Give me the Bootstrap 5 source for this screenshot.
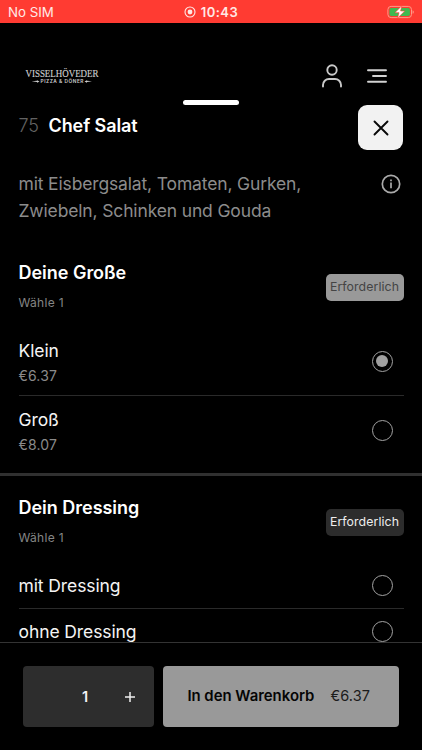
<!DOCTYPE html>
<html lang="de" data-bs-theme="dark">
<head>
<meta charset="utf-8">
<meta name="viewport" content="width=device-width, initial-scale=1">
<title>Chef Salat</title>
<link href="https://cdn.jsdelivr.net/npm/bootstrap@5.3.0/dist/css/bootstrap.min.css" rel="stylesheet">
<style>
body{height:750px;background:#000;color:#f4f4f4;font-family:Inter,"Liberation Sans",sans-serif;font-size:17.5px;line-height:24px;letter-spacing:-.1px}
svg{display:block;flex:none}
.status{height:23px;background:#ff3b32;color:#ffe9e6;font-size:13.3px;padding:0 8px;letter-spacing:0}
.status>*{flex:1 1 0}
.clock{font-weight:600;font-size:13px;gap:5px;letter-spacing:.5px}
.topnav{height:77px;padding:28px 35.5px 0 25px}
.brand{font-family:"Liberation Serif",serif;color:#d0d0d0;letter-spacing:0;overflow:visible}
.menu-icon{margin-left:24px}
.handle{width:56px;height:5px;background:#fff}
.sheet{padding:0 18.5px}
.sheet-first{padding-top:34.5px}
.sheet-next{padding-top:17.5px}
.item-no{color:#626262;margin-right:9.5px}
.item-title,.group-title{font-size:18px;font-weight:600;color:#fff;letter-spacing:-.02px}
.item-title{padding-top:7px;letter-spacing:-.07px}
.close-btn{width:45px;height:45px;border-radius:9px;background:#f2f2f2;margin-right:.5px}
.desc{margin-top:20px;line-height:27px;color:#8c8c8c;letter-spacing:-.15px}
.desc svg{margin:4px 3px 0 0}
.hint{font-size:12px;line-height:16px;color:#858585;letter-spacing:.3px;margin-top:9px}
.tag{width:78px;height:27.5px;border-radius:5px;font-size:12.300px;letter-spacing:.1px;margin-top:15px}
.tag-done{background:#999;color:#444}
.tag-open{background:#2c2c2c;color:#eee}
.choices{padding-top:17px}
.choice{border-bottom:1px solid #2a2a2a;padding-right:11px}
.choice:last-child{border-bottom:0}
.choice>:first-child{padding-top:2px}
.choice-lg{height:68.5px}
.choice-sm{height:46px}
.choice-sm>:first-child{padding-top:1px}
.price{font-size:14px;line-height:20px;color:#8a8a8a;margin-top:3px;letter-spacing:.15px}
.radio{width:21px;height:21px;border:1.2px solid #a3a3a3;border-radius:50%;flex:none}
.radio.on::after{content:"";width:12px;height:12px;border-radius:50%;background:#a0a0a0}
.band{height:3.5px;background:#303030}
.footer{height:108px;border-top:1px solid #333;padding:22.5px 23px 23px;gap:9.5px;background:#000;font-size:14.5px}
.stepper,.cart{border-radius:4px;height:61.5px}
.stepper{width:131px;background:#2d2d2d;padding:2px 19px 0 59px;font-weight:600}
.cart,.cart:hover{width:236px;background:#999;color:#050505;gap:16px;font-size:14.900px;letter-spacing:0}
.cart span{color:#1c1c1c;font-size:14.5px;margin-right:5px;letter-spacing:.1px}
</style>
<script src="https://cdn.jsdelivr.net/npm/bootstrap@5.3.0/dist/js/bootstrap.bundle.min.js"></script>
</head>
<body class="d-flex flex-column overflow-hidden">
<div class="status d-flex align-items-center flex-shrink-0">
  <span>No SIM</span>
  <div class="clock d-flex align-items-center justify-content-center">
    <svg width="12" height="12" viewBox="0 0 12 12"><circle cx="6" cy="6" r="5" fill="none" stroke="#ffe9e6" stroke-width="1.1"/><circle cx="6" cy="6" r="2.4" fill="#ffe9e6"/></svg>
    <span>10:43</span>
  </div>
  <div class="d-flex justify-content-end">
    <svg width="27" height="14" viewBox="0 0 27 14"><rect x=".9" y="1.4" width="23.6" height="11.2" rx="3.2" fill="none" stroke="#ff9a87"/><rect x="2.5" y="3" width="20.4" height="8" rx="1.8" fill="#3fb950"/><path d="M25.6 5.2q1.2.4 1.2 1.8t-1.2 1.8z" fill="#ff9a87"/><path d="M14.8.8 7.9 7.7H12L10.5 13.200 17.800 6H13.600z" fill="#fff" stroke="#ff3b32" stroke-width=".6"/></svg>
  </div>
</div>
<nav class="topnav d-flex align-items-center flex-shrink-0">
  <svg class="brand" width="75" height="26" viewBox="0 -3 75 26" fill="currentColor"><text x=".5" y="11.300" font-size="10.800" textLength="73" lengthAdjust="spacingAndGlyphs" stroke="currentColor" stroke-width=".15">VISSELHÖVEDER</text><text x="15.500" y="17.300" font-family="Inter,sans-serif" font-weight="600" font-size="4.800" textLength="43" lengthAdjust="spacing">PIZZA &amp; DÖNER</text><path d="M6.500 15.300 12 14.800V14.200l2.500 1.300L12 16.700V16zM67 15.300l-5-.5V14.200L59.500 15.500l2.500 1.200V16z"/></svg>
  <svg class="ms-auto" width="22" height="24" viewBox="0 0 22 24" fill="none" stroke="#c9c9c9" stroke-width="1.900" stroke-linecap="round"><circle cx="11" cy="6" r="4.700"/><path d="M2 22.500v-1.500a6 6 0 0 1 6-6h6a6 6 0 0 1 6 6v1.500"/></svg>
  <svg class="menu-icon" width="20" height="14" viewBox="0 0 20 14" stroke="#d2d2d2" stroke-width="1.900" stroke-linecap="round"><path d="M1 1.300h18M6 7h13M1 12.700h18"/></svg>
</nav>
<div class="handle rounded-pill mx-auto flex-shrink-0"></div>
<main class="flex-grow-1 overflow-hidden">
  <section class="sheet">
    <div class="d-flex">
      <h1 class="item-title d-flex m-0 lh-base"><span class="item-no fw-light">75</span>Chef Salat</h1>
      <button class="close-btn btn p-0 d-flex align-items-center justify-content-center ms-auto" aria-label="Schließen"><svg width="16" height="16" viewBox="0 0 16 16" stroke="#080808" stroke-width="1.900" stroke-linecap="round"><path d="m1.500 1.500 13 13m0-13-13 13"/></svg></button>
    </div>
    <div class="desc d-flex justify-content-between align-items-start">
      <div>mit Eisbergsalat, Tomaten, Gurken,<br>Zwiebeln, Schinken und Gouda</div>
      <svg width="20" height="20" viewBox="0 0 20 20" fill="none" stroke="#aaa" stroke-width="1.700"><circle cx="10" cy="10" r="8.700"/><path d="M10 8.600v5.700M10 5.500v1.700"/></svg>
    </div>
  </section>
  <section class="sheet sheet-first">
    <div class="d-flex justify-content-between align-items-start">
      <div><h2 class="group-title lh-base m-0">Deine Große</h2><div class="hint">Wähle 1</div></div>
      <span class="tag tag-done d-flex align-items-center justify-content-center">Erforderlich</span>
    </div>
    <div class="choices">
      <div class="choice choice-lg d-flex align-items-center justify-content-between"><div>Klein<div class="price">€6.37</div></div><span class="radio on d-flex align-items-center justify-content-center"></span></div>
      <div class="choice choice-lg d-flex align-items-center justify-content-between"><div>Groß<div class="price">€8.07</div></div><span class="radio"></span></div>
    </div>
  </section>
  <div class="band mt-2"></div>
  <section class="sheet sheet-next">
    <div class="d-flex justify-content-between align-items-start">
      <div><h2 class="group-title lh-base m-0">Dein Dressing</h2><div class="hint">Wähle 1</div></div>
      <span class="tag tag-open d-flex align-items-center justify-content-center">Erforderlich</span>
    </div>
    <div class="choices">
      <div class="choice choice-sm d-flex align-items-center justify-content-between"><span>mit Dressing</span><span class="radio"></span></div>
      <div class="choice choice-sm d-flex align-items-center justify-content-between"><span>ohne Dressing</span><span class="radio"></span></div>
    </div>
  </section>
</main>
<footer class="footer d-flex flex-shrink-0">
  <div class="stepper d-flex align-items-center justify-content-between"><span>1</span><svg width="10" height="10" viewBox="0 0 10 10" stroke="#eee" stroke-width="1.500"><path d="M5 0v10M0 5h10"/></svg></div>
  <button class="cart btn p-0 d-flex align-items-center justify-content-center"><strong class="fw-semibold">In den Warenkorb</strong><span>€6.37</span></button>
</footer>
</body>
</html>
